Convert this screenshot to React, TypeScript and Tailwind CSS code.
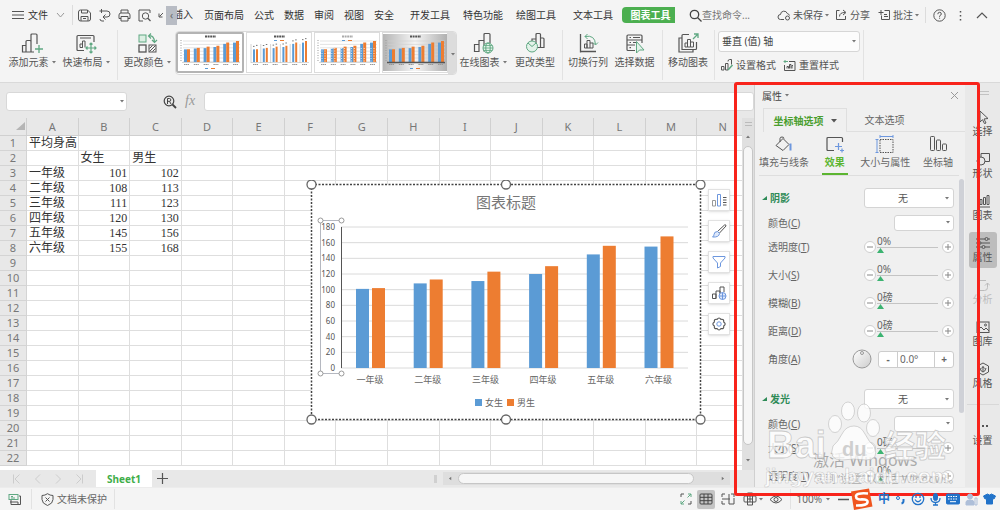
import { useState } from 'react';
import type { ReactNode } from 'react';

const GRADES = ['一年级', '二年级', '三年级', '四年级', '五年级', '六年级'];
const GIRLS = [101, 108, 111, 120, 145, 155];
const BOYS = [102, 113, 123, 130, 156, 168];

const COLUMNS = ['A', 'B', 'C', 'D', 'E', 'F', 'G', 'H', 'I', 'J', 'K', 'L', 'M', 'N'];
const ROWS = Array.from({ length: 22 }, (_, i) => i + 1);

const G = '#5fa882';
const B = '#6d97de';

interface IconProps {
  w?: number;
  h?: number;
  children: ReactNode;
  className?: string;
}

const Icon = ({ w = 14, h = 14, children, className = 'text-[#555]' }: IconProps) => (
  <svg
    width={w}
    height={h}
    viewBox={`0 0 ${w} ${h}`}
    fill="none"
    stroke="currentColor"
    strokeWidth={1}
    className={`shrink-0 ${className}`}
    aria-hidden="true"
  >
    {children}
  </svg>
);

const Caret = () => (
  <svg width="4" height="3" viewBox="0 0 4 3" className="shrink-0 text-[#777]" aria-hidden="true">
    <path d="M0 0h4L2 2.6z" fill="currentColor" />
  </svg>
);

const Separator = () => <div className="w-px self-stretch bg-[#e2e2e2]" />;

/* ---------- Menu bar ---------- */

const MenuBar = () => (
  <header className="flex h-[30px] shrink-0 items-center bg-[#f4f4f4] pl-3 text-[10px] leading-4 text-[#333]">
    <button className="flex items-center gap-1">
      <Icon w={12} h={10}>
        <path d="M0 1.5h12M0 5h12M0 8.5h12" />
      </Icon>
      <span>文件</span>
      <Icon w={9} h={6} className="ml-1 text-[#999]">
        <path d="M1 1l3.5 4L8 1" />
      </Icon>
    </button>
    <div className="mr-[5px] ml-[7px] h-5 w-px bg-[#dcdcdc]" />
    <div className="flex items-center gap-[7px]">
      <button aria-label="保存">
        <Icon w={13} h={13}>
          <path d="M.5 3Q.5 1 2.500 1h7l3 3v6q0 2-2 2h-8q-2 0-2-2zM3.500 1v3h6V1M3 12V7.500h7V12M5 9.500h3" />
        </Icon>
      </button>
      <button aria-label="输出">
        <Icon w={13} h={13}>
          <path d="M1.500 2H9a3 3 0 0 1 0 6H5M7.500 5.500L5 8l2.500 2.500M3.500 0v4M6 12h-2q-2 0-2-2" />
        </Icon>
      </button>
      <button aria-label="打印">
        <Icon w={13} h={13}>
          <path d="M3 4V1h7v3M3 9.500H1V6q0-2 2-2h7q2 0 2 2v3.500h-2M3 7.500h7V12H3z" />
        </Icon>
      </button>
      <button aria-label="打印预览">
        <Icon w={13} h={13}>
          <path d="M5 12H1V1h11v3" />
          <circle cx="7.500" cy="7" r="3.200" />
          <path d="M9.800 9.300L12.500 12" strokeWidth="1.300" />
        </Icon>
      </button>
      <Icon w={6} h={6}>
        <path d="M5 1L1.500 4.500M1 1.500V5h3.500" />
      </Icon>
    </div>
    <div className="ml-[2px] flex">
      <button aria-label="向左滚动" className="h-[19px] w-[11px] bg-[#b8bcc4] text-[10px] leading-4 text-[#666]">‹</button>
      <div className="w-4 overflow-hidden">
        <button className="-ml-1 whitespace-nowrap">插入</button>
      </div>
    </div>
    <nav className="ml-[11px] flex items-center whitespace-nowrap">
      <div className="flex gap-[10px]">
        {['页面布局', '公式', '数据', '审阅', '视图', '安全'].map((item) => (
          <button key={item}>{item}</button>
        ))}
      </div>
      <div className="ml-4 flex gap-[13px]">
        {['开发工具', '特色功能', '绘图工具'].map((item) => (
          <button key={item}>{item}</button>
        ))}
      </div>
      <button className="ml-[17px]">文本工具</button>
      <button className="ml-[9px] h-4 w-[53px] rounded-l-[4px] bg-[#4caf50] pl-1 font-bold text-white">图表工具</button>
    </nav>
    <label className="ml-[14px] flex items-center text-[#777]">
      <Icon w={13} h={13} className="text-[#444]">
        <circle cx="5.500" cy="5.500" r="4.200" strokeWidth="1.300" />
        <path d="M8.500 8.500L12.500 12.500" strokeWidth="1.300" />
      </Icon>
      <input
        className="w-[50px] bg-transparent outline-none placeholder:text-[#777]"
        placeholder="查找命令..."
        aria-label="查找命令"
      />
    </label>
    <div className="ml-auto flex items-center whitespace-nowrap text-[#555]">
      <button className="flex items-center gap-[2px]">
        <Icon w={14} h={12}>
          <path d="M7 10.500H3.500a2.500 2.500 0 0 1 0-5A3.500 3.500 0 0 1 10.300 4.500a3 3 0 0 1 2.200 2" />
          <circle cx="10.500" cy="9" r="2" />
        </Icon>
        未保存
        <Caret />
      </button>
      <button className="ml-[6px] flex items-center gap-[3px]">
        <Icon w={12} h={12}>
          <path d="M4.500 1.500h-3v9h9V7M4.500 7.500q0-4 5.500-4M8 1l3 2.500L8 6" />
        </Icon>
        分享
      </button>
      <button className="ml-[8px] flex items-center gap-[2px]">
        <Icon w={13} h={12}>
          <path d="M6.500 1.500h5v9h-8v-4M0.500 3.500h5M3 1v5M6 5.500h3M6 7.500h4" />
        </Icon>
        批注
        <Caret />
      </button>
      <div className="mr-[7px] ml-[6px] h-4 w-px bg-[#dcdcdc]" />
      <button aria-label="帮助">
        <Icon w={13} h={13}>
          <circle cx="6.500" cy="6.500" r="5.700" />
          <path d="M4.800 5.200q0-1.900 1.800-1.900t1.700 1.700q0 1-1.700 1.900v.9M6.600 8.700v1" />
        </Icon>
      </button>
      <button aria-label="更多" className="ml-[13px]">
        <Icon w={3} h={11}>
          <path d="M1.500 1v1.500M1.500 5v1.500M1.500 9v1.500" strokeWidth="1.500" />
        </Icon>
      </button>
      <button aria-label="收起" className="mr-[12px] ml-[14px]">
        <Icon w={12} h={8}>
          <path d="M1 7l5-5 5 5" strokeWidth="1.200" />
        </Icon>
      </button>
    </div>
  </header>
);

/* ---------- Ribbon ---------- */

interface RibbonButtonProps {
  label: string;
  width: string;
  caret?: boolean;
  children: ReactNode;
}

const RibbonButton = ({ label, width, caret, children }: RibbonButtonProps) => (
  <button className={`${width} flex shrink-0 flex-col items-center justify-start pt-[2px]`}>
    <Icon w={22} h={22}>{children}</Icon>
    <span className="flex items-center gap-[3px] leading-4 whitespace-nowrap">
      {label}
      {caret && <Caret />}
    </span>
  </button>
);

interface MiniChartProps {
  variant: number;
  active?: boolean;
}

const MiniChart = ({ variant, active }: MiniChartProps) => {
  const dark = variant === 3;
  const barWidth = variant === 1 ? 2 : 3;
  return (
    <button
      aria-label={`样式 ${variant + 1}`}
      className={active ? 'rounded-[2px] border-2 border-[#b4b4b4] bg-white' : 'border border-[#dcdcdc] bg-white'}
    >
      <svg width="64" height="37" viewBox="0 0 64 37" aria-hidden="true">
        <defs>
          <linearGradient id={`bg${variant}`} x1="0" x2="1">
            <stop offset="0" stopColor="#b5b5b5" />
            <stop offset="0.500" stopColor="#f5f5f5" />
            <stop offset="1" stopColor="#b0b0b0" />
          </linearGradient>
        </defs>
        <rect width="64" height="37" fill={dark ? `url(#bg${variant})` : '#fff'} />
        <path d="M27 2.500h11" stroke={variant === 2 ? '#aaa' : '#555'} strokeWidth="2" strokeDasharray="2 .6" />
        {variant !== 1 &&
          [0, 1, 2, 3, 4, 5, 6].map((i) => (
            <path key={i} d={`M5 ${7 + i * 3.400}h57`} stroke="#d0d0d0" strokeWidth=".6" />
          ))}
        {variant !== 1 && <path d="M3 6v22" stroke="#999" strokeDasharray="1 1.500" />}
        {GRADES.map((grade, i) => {
          const x = 6 + i * 9.800;
          return (
            <g key={grade}>
              {variant === 1 && <path d={`M${x - 2} 10v19`} stroke="#aaa" strokeWidth=".5" />}
              <rect x={x} y={28 - GIRLS[i] * 0.125} width={barWidth} height={GIRLS[i] * 0.125} fill="#5b9bd5" />
              <rect x={x + 3} y={28 - BOYS[i] * 0.125} width={barWidth} height={BOYS[i] * 0.125} fill="#ed7d31" />
              {variant === 2 && <path d={`M${x + 1} 14v14M${x + 4} 14v14`} stroke="#fff" strokeWidth=".8" strokeDasharray="1 1.500" />}
              {variant === 1 && <path d={`M${x} ${25 - GIRLS[i] * 0.125}h1.500m1.500-1h1.500`} stroke="#777" />}
              <path d={`M${x} 30.500h5`} stroke="#999" strokeDasharray="1.500 .4" />
            </g>
          );
        })}
        <path d="M4 28.500h58" stroke={dark ? '#555' : '#bbb'} strokeWidth={dark ? 1.500 : 0.600} />
        <path d={variant === 0 || dark ? 'M27 34.500h3' : 'M27 6.500h3'} stroke="#5b9bd5" />
        <path d={variant === 0 || dark ? 'M33 34.500h4' : 'M33 6.500h4'} stroke="#ed7d31" />
      </svg>
    </button>
  );
};

const Ribbon = () => (
  <section className="flex h-[53px] shrink-0 border-b border-[#d9d9d9] bg-[#f4f4f4] pb-[2px] pl-[5px] text-[10px] text-[#555]">
    <RibbonButton label="添加元素" width="w-[54px]" caret>
      <path d="M1.500 20V13.500h3.500V20zM5 20V9.500q0-1 1-1h3q1 0 1 1V20H5M10 12V3q0-1 1-1h4q1 0 1 1v9M10 20h3" strokeWidth="1.200" />
      <path d="M18 13v8M14 17h8" stroke={G} strokeWidth="1.300" />
    </RibbonButton>
    <RibbonButton label="快速布局" width="w-[54px]" caret>
      <path d="M9 18.500H3q-1 0-1-1v-13q0-1 1-1h15q1 0 1 1V10M5 6h11" strokeWidth="1.200" />
      <path d="M5 15.500V12h2.500v3.500zM7.500 15.500V9H10v6.500" />
      <path d="M16 11v10M11 16h10M14.500 12.500L16 11l1.500 1.500M14.500 19.500L16 21l1.500-1.500M12.500 14.500L11 16l1.500 1.500M19.500 14.500L21 16l-1.500 1.500" stroke={G} strokeWidth="1.200" />
    </RibbonButton>
    <div className="mr-[2px] ml-1 flex"><Separator /></div>
    <RibbonButton label="更改颜色" width="w-[54px]" caret>
      <rect x="3" y="3" width="7" height="7" stroke={G} fill="#dcefe3" />
      <rect x="3" y="13" width="7" height="7" strokeWidth="1.300" />
      <rect x="13" y="13" width="7" height="7" />
      <path d="M13.500 19.500l6-6M13.500 16.500l3-3M16.500 19.500l3-3" />
      <path d="M13 4q5-1 5.500 6M15 1.500L12.500 4 15 6.500M16 8l2.500 2.500L21 8" stroke={G} strokeWidth="1.200" />
    </RibbonButton>
    <div className="mt-[1px] ml-px flex h-11 w-[282px] shrink-0 items-start overflow-hidden rounded-[4px] border border-[#dadada] bg-white">
      <div className="flex gap-[2px]">
        <MiniChart variant={0} active />
        <MiniChart variant={1} />
        <MiniChart variant={2} />
        <MiniChart variant={3} />
      </div>
      <button aria-label="更多样式" className="ml-auto flex h-11 w-[10px] shrink-0 items-center justify-center bg-[#dcdcdc]">
        <Caret />
      </button>
    </div>
    <RibbonButton label="在线图表" width="w-[52px]" caret>
      <path d="M2.500 19.500v-7H7v7zM7 19.500V8.500h5v11M12 12V2.500q0-1 1-1h4q1 0 1 1V11" strokeWidth="1.200" />
      <circle cx="16" cy="16" r="5" fill="#e3f2e9" stroke={G} />
      <ellipse cx="16" cy="16" rx="2.200" ry="5" stroke={G} />
      <path d="M11 16h10M12 13.500h8M12 18.500h8" stroke={G} strokeWidth=".8" />
    </RibbonButton>
    <RibbonButton label="更改类型" width="w-[52px]">
      <path d="M8 9V7h4v8M12 15.500v-13q0-1 1-1h2.500q1 0 1 1v13H13M16.500 6H19q1 0 1 1v8.500h-4" strokeWidth="1.200" />
      <circle cx="8" cy="14.500" r="5.500" fill="#e3f2e9" stroke={G} />
      <path d="M4 11l4 3.500 4-3.500" stroke={G} />
    </RibbonButton>
    <div className="mr-[2px] ml-px flex"><Separator /></div>
    <RibbonButton label="切换行列" width="w-[46px]">
      <path d="M3.500 2v17.500H19M3.500 19.500v1" strokeWidth="1.300" />
      <path d="M7.500 16V12H10v4zM10 16V8.500h3V16zM13 11h3v5h-3" />
      <path d="M8 4.500q10-2 10.500 8M10.500 2L8 4.500 10.500 7M16 10.500l2.500 2.500 2.500-2.500" stroke={G} />
    </RibbonButton>
    <RibbonButton label="选择数据" width="w-[47px]">
      <path d="M11 18.500H4q-1 0-1-1V4q0-1 1-1h13q1 0 1 1v7M3 8h15M3 13h8M5.500 5.500H7M5.500 10.500H7M5.500 15.700H7M9 5.500h7M9 10.500h3" strokeWidth="1.200" />
      <path d="M12.500 9.500V21l3-3H20z" stroke={G} fill="#e3f2e9" />
    </RibbonButton>
    <div className="mr-[2px] ml-1 flex"><Separator /></div>
    <RibbonButton label="移动图表" width="w-[46px]">
      <path d="M12 2.500H6q-1 0-1 1v14h13.500q1 0 1-1V10M5 6H2v14h14v-2.500" strokeWidth="1.200" />
      <path d="M8 15v-4h2.500v4zM10.500 15V7.500h3V15zM13.500 10h3v5h-3" />
      <path d="M16 7l4.500-4.500M17 2h4v4" stroke={G} strokeWidth="1.300" />
    </RibbonButton>
    <div className="mr-[3px] ml-[3px] flex"><Separator /></div>
    <div className="flex w-[142px] shrink-0 flex-col gap-[5px] pt-[1px]">
      <button className="flex h-[21px] items-center justify-between rounded-[3px] border border-[#d6d6d6] bg-[#fcfcfc] px-[3px] text-[#444]">
        <span>垂直 (值) 轴</span>
        <Caret />
      </button>
      <div className="flex items-center justify-between pr-[21px] pl-[2px] leading-4">
        <button className="flex items-center gap-[2px]">
          <Icon w={14} h={14}>
            <path d="M1.500 12V8.500H4V12zM5.500 12V5.500H8V12zM8 3.500q0-2 1.500-2h2v5" />
            <path d="M12.500 7L8 12" stroke={G} strokeWidth="1.500" />
          </Icon>
          设置格式
        </button>
        <button className="flex items-center gap-[3px]">
          <Icon w={13} h={13}>
            <path d="M6 2.500h6v9H1.500V6M4 9.500v-2h1.500v2M6.500 9.500v-4h1.500v4M9 9.500v-3h1" />
            <path d="M1 2.500h4M2.500 1L1 2.500 2.500 4" stroke={G} />
          </Icon>
          重置样式
        </button>
      </div>
    </div>
    <div className="ml-[3px] flex"><Separator /></div>
  </section>
);

/* ---------- Sheet ---------- */

const FormulaBar = () => (
  <div className="flex h-[35px] shrink-0 items-start bg-[#e8e8e8] pt-[9px] pl-[6px]">
    <div className="flex h-[19px] w-[121px] items-center rounded-[3px] border border-[#d8d8d8] bg-white pr-[2px]">
      <input aria-label="名称框" className="w-full min-w-0 text-[10px] outline-none" />
      <Caret />
    </div>
    <Icon w={14} h={14} className="mt-[3px] ml-9 text-[#444]">
      <circle cx="6" cy="6" r="4.800" strokeWidth="1.200" />
      <path d="M9.500 9.500L13 13" strokeWidth="1.800" />
      <path d="M4.500 9V3.500h2q1.300 0 1.300 1.400T6.500 6.300h-2M6.500 6.300L8 9" />
    </Icon>
    <span className="ml-[8px] w-[19px] font-['Liberation_Serif',serif] text-[14px] leading-[18px] text-[#999] italic">fx</span>
    <input aria-label="编辑栏" className="h-[19px] min-w-0 flex-1 rounded-[3px] border border-[#d8d8d8] bg-white px-1 text-[10px] outline-none" />
  </div>
);

const cellText = (row: number, col: number) => {
  if (row === 1) return col === 0 ? '平均身高' : '';
  if (row === 2) return ['', '女生', '男生'][col] ?? '';
  if (row > 8 || col > 2) return '';
  return [GRADES[row - 3], GIRLS[row - 3], BOYS[row - 3]][col];
};

const SheetTable = () => (
  <table className="w-[749px] table-fixed border-separate border-spacing-0">
    <thead>
      <tr className="h-[18px] bg-[#e8e8e8] text-[11px] leading-[14px] text-[#777]">
        <th className="w-[27px] border-r border-b border-[#d0d0d0] p-0">
          <svg width="10" height="9" viewBox="0 0 10 9" className="ml-auto" aria-hidden="true">
            <path d="M9 0v8H0z" fill="#b5b5b5" />
          </svg>
        </th>
        {COLUMNS.map((col) => (
          <th key={col} className="border-r border-b border-[#d0d0d0] p-0 font-normal">{col}</th>
        ))}
      </tr>
    </thead>
    <tbody>
      {ROWS.map((row) => (
        <tr key={row} className="h-[15px]">
          <th className="border-r border-b border-[#d4d4d4] bg-[#e8e8e8] p-0 text-[11px] leading-[14px] font-normal text-[#777]">{row}</th>
          {COLUMNS.map((col, c) => (
            <td
              key={col}
              className={`h-[15px] border-r border-b border-[#dedede] p-0 px-[2px] font-['Liberation_Serif','Noto_Sans_CJK_SC',serif] text-[12px] leading-[14px] whitespace-nowrap text-[#333] ${row > 2 && c > 0 ? 'text-right' : ''}`}
            >
              {cellText(row, c)}
            </td>
          ))}
        </tr>
      ))}
    </tbody>
  </table>
);

const AXIS = [0, 20, 40, 60, 80, 100, 120, 140, 160, 180];
const BASE = 188;
const SCALE = 141 / 180;

const Chart = () => (
  <svg width="402" height="246" viewBox="0 0 402 246" className="font-['Noto_Sans','Noto_Sans_CJK_SC',sans-serif]" role="img" aria-label="图表标题">
    <rect x="5.500" y="4.500" width="389" height="235" fill="#fff" stroke="#444" strokeWidth="1.500" strokeDasharray="2 1.500" />
    <text x="200" y="28" fontSize="15" textAnchor="middle" fill="#777">图表标题</text>
    {AXIS.map((v) => (
      <g key={v}>
        <path d={`M35 ${BASE - v * SCALE}h347`} stroke="#dadada" />
        <text x="29" y={BASE + 3 - v * SCALE} fontSize="8" textAnchor="end" fill="#555">{v}</text>
      </g>
    ))}
    {GRADES.map((grade, i) => {
      const x = 50 + i * 57.700;
      return (
        <g key={grade}>
          <rect x={x} y={BASE - GIRLS[i] * SCALE} width="13" height={GIRLS[i] * SCALE} fill="#5b9bd5" />
          <rect x={x + 16} y={BASE - BOYS[i] * SCALE} width="13" height={BOYS[i] * SCALE} fill="#ed7d31" />
          <text x={x + 14} y="203" fontSize="9" textAnchor="middle" fill="#666">{grade}</text>
        </g>
      );
    })}
    <path d="M35.500 47v141" stroke="#555" />
    <path d="M35.500 40.500h-21v153h21" stroke="#b5b8c0" fill="none" />
    {[[14.5, 40.5], [35.5, 40.5], [14.5, 193.5], [35.5, 193.5]].map(([x, y]) => (
      <circle key={`${x}-${y}`} cx={x} cy={y} r="2.500" fill="#fff" stroke="#999" />
    ))}
    <rect x="169" y="219" width="7" height="7" fill="#5b9bd5" />
    <text x="179" y="226" fontSize="9" fill="#666">女生</text>
    <rect x="201" y="219" width="7" height="7" fill="#ed7d31" />
    <text x="211" y="226" fontSize="9" fill="#666">男生</text>
    {[[5.5, 4.5], [200, 4.5], [394.5, 4.5], [5.5, 239.5], [200, 239.5], [394.5, 239.5]].map(([x, y]) => (
      <circle key={`${x}-${y}`} cx={x} cy={y} r="4.500" fill="#fff" stroke="#666" strokeWidth="1.300" />
    ))}
  </svg>
);

const CHART_TOOLS = [
  {
    label: '图表元素',
    icon: (
      <>
        <path d="M1.500 14V8.500h3V14z" stroke="#999" />
        <path d="M6.500 14V2.500h3V14z" stroke={B} />
        <path d="M12 5.500h3.500M12 8h3.500M12 10.500h3.500M12 13h3.500" />
      </>
    ),
  },
  {
    label: '图表样式',
    icon: (
      <>
        <path d="M6.500 8.500l7-6.500q1.500-.8 1.500 1L8.500 10" />
        <path d="M6.500 8.500l2 2q-.5 4-7 3.500 1.500-1 1.500-2.500 0-2.800 3.500-3z" stroke={B} fill="#dfe9fa" />
      </>
    ),
  },
  { label: '图表筛选', icon: <path d="M2 2.500h12v1.500L9.500 9v3.500L6.500 14V9L2 4z" stroke={B} /> },
  {
    label: '在线图表',
    icon: (
      <>
        <path d="M1.500 13.500V9h3.500v4.500zM5 13.500V6h4v7M9 8V2h4v5" />
        <circle cx="11.500" cy="11" r="3.500" fill="#dfe9fa" stroke={B} />
        <path d="M8 11h7M11.500 7.500v7" stroke={B} />
      </>
    ),
  },
  {
    label: '设置',
    icon: (
      <>
        <path
          d="M6.300 3Q8 .5 9.700 3q2.900-.6 2.400 2.300 2.600 1.700 0 3.400.5 2.900-2.400 2.300Q8 13.500 6.300 11q-2.900.6-2.400-2.300-2.600-1.700 0-3.400Q3.400 2.400 6.300 3z"
          transform="translate(-1.100 0) scale(1.140)"
        />
        <circle cx="8" cy="8" r="2.200" stroke={B} />
      </>
    ),
  },
];

const Sheet = () => (
  <div className="flex min-w-0 flex-1 flex-col">
    <FormulaBar />
    <div className="relative flex min-h-0 flex-1">
      <div className="min-w-0 flex-1 overflow-hidden bg-white">
        <SheetTable />
      </div>
      <div className="flex w-[12px] shrink-0 flex-col items-center bg-[#e0e0e0]">
        <div className="mt-1 h-[4px] w-[7px] border-y border-[#bbb]" />
        <div className="mt-[9px] rotate-180"><Caret /></div>
        <div className="mt-[8px] w-[10px] flex-1 rounded-full border border-[#c6c6c6] bg-[#f6f6f6]" />
        <div className="mt-[14px] mb-[8px] flex h-[3px] items-center"><Caret /></div>
      </div>
      {/* the floating chart and its tool buttons sit over the cells */}
      <div className="absolute top-[62px] left-[306px] flex">
        <Chart />
        <div className="flex flex-col gap-[9px] pt-[9px]">
          {CHART_TOOLS.map(({ label, icon }) => (
            <button key={label} aria-label={label} className="flex size-[22px] items-center justify-center border border-[#e2e2e2] bg-white shadow-sm">
              <Icon w={16} h={16}>{icon}</Icon>
            </button>
          ))}
        </div>
      </div>
    </div>
    <div className="flex h-[17px] shrink-0 items-center bg-[#e8e8e8]">
      <div className="flex gap-[12px] pl-3">
        {['M1.500 0.500v9M7.500 0.500L3 5l4.500 4.500', 'M7 0.500L2.500 5 7 9.500', 'M2 0.500L6.500 5 2 9.500', 'M1.500 0.500L6 5 1.500 9.500M7.500 0.500v9'].map((d) => (
          <Icon key={d} w={9} h={10} className="text-[#ccc]">
            <path d={d} />
          </Icon>
        ))}
      </div>
      <button className="ml-[12px] h-full w-14 bg-white text-[10px] leading-4 font-bold text-[#3fae49]">Sheet1</button>
      <button aria-label="新建工作表" className="ml-[5px]">
        <Icon w={11} h={11}>
          <path d="M5.500 0v11M0 5.500h11" strokeWidth="1.200" />
        </Icon>
      </button>
      <div className="mr-[6px] ml-auto h-2 w-[3px] bg-[#d0d0d0]" />
      <div className="mr-[24px] flex h-[13px] w-[287px] items-center bg-[#dedede] px-[5px]">
        <div className="rotate-90"><Caret /></div>
        <div className="ml-[6px] h-[11px] w-[236px] rounded-full border border-[#c6c6c6] bg-[#f6f6f6]" />
        <div className="ml-auto -rotate-90"><Caret /></div>
      </div>
    </div>
  </div>
);

/* ---------- Property panel ---------- */

const PANEL_TABS = [
  {
    label: '填充与线条',
    icon: (
      <>
        <path d="M2 10.500L9 3.500l6 6-6 6zM6 7V3.500Q6 2 8 2t2 1.500" />
        <path d="M16.500 8.500v7" stroke={B} strokeWidth="2" />
      </>
    ),
  },
  {
    label: '效果',
    icon: (
      <>
        <path d="M9 15.500H3q-1 0-1-1v-11q0-1 1-1h13.500q1 0 1 1V7" strokeWidth="1.200" />
        <path d="M13.500 8v7M10 11.500h7M17 13.500v4M15 15.500h4" stroke={B} strokeWidth="1.200" />
      </>
    ),
  },
  {
    label: '大小与属性',
    icon: (
      <>
        <rect x="5" y="4.500" width="13" height="13" strokeDasharray="1.500 1" />
        <path d="M5 1.500h13M5 0v3M18 0v3M2 4.500v13M.5 4.500h3M.5 17.500h3" stroke={B} />
      </>
    ),
  },
  {
    label: '坐标轴',
    icon: (
      <>
        <rect x="2.500" y="1.500" width="4" height="14" rx=".8" />
        <rect x="8.500" y="5" width="4" height="10.500" rx=".8" />
        <rect x="14.500" y="9" width="4" height="6.500" rx=".8" />
      </>
    ),
  },
];

interface FieldProps {
  id: string;
  name: string;
  hotkey: string;
}

const FieldLabel = ({ id, name, hotkey }: FieldProps) => (
  <label htmlFor={id}>
    {name}(<u>{hotkey}</u>)
  </label>
);

const EffectHeader = ({ id, name }: { id: string; name: string }) => (
  <div className="flex h-7 items-center">
    <svg width="5" height="5" viewBox="0 0 5 5" aria-hidden="true">
      <path d="M5 0v4H0z" fill="#2e8b57" />
    </svg>
    <label htmlFor={id} className="ml-[3px] font-bold text-[#2e8b57]">{name}</label>
    <div className="ml-auto flex h-[20px] w-[90px] items-center rounded-[3px] border border-[#d4d4d4] bg-white pr-1">
      <select id={id} className="min-w-0 flex-1 appearance-none pr-2 pl-[33px] text-[10px] text-[#555] outline-none">
        <option>无</option>
      </select>
      <Caret />
    </div>
  </div>
);

const ColorField = ({ id }: { id: string }) => (
  <div className="flex h-[21px] items-center pl-[6px]">
    <FieldLabel id={id} name="颜色" hotkey="C" />
    <button id={id} aria-label="颜色" className="ml-auto flex h-4 w-[60px] items-center justify-end rounded-[3px] border border-[#d4d4d4] bg-white pr-[3px]">
      <Caret />
    </button>
  </div>
);

const StepButton = ({ plus }: { plus?: boolean }) => (
  <button aria-label={plus ? '增加' : '减少'} className="flex size-3 items-center justify-center rounded-full border border-[#cfcfcf] bg-white">
    <Icon w={6} h={6} className="text-[#888]">
      <path d={plus ? 'M0 3h6M3 0v6' : 'M0 3h6'} />
    </Icon>
  </button>
);

const SliderField = ({ id, name, hotkey, unit }: FieldProps & { unit: string }) => {
  const [value, setValue] = useState(0);
  return (
    <div className="flex h-7 items-center pl-[6px]">
      <FieldLabel id={id} name={name} hotkey={hotkey} />
      <div className="ml-auto flex items-center">
        <StepButton />
        <div className="mr-[4px] ml-[1px] flex h-7 w-[61px] flex-col pt-[3px]">
          <span className="h-[11px] leading-[11px] whitespace-nowrap">{value}{unit}</span>
          <input
            id={id}
            type="range"
            value={value}
            onChange={(e) => setValue(Number(e.target.value))}
            className="block h-[6px] w-full appearance-none bg-transparent [&::-webkit-slider-runnable-track]:h-[6px] [&::-webkit-slider-runnable-track]:border-t [&::-webkit-slider-runnable-track]:border-[#c4c4c4] [&::-webkit-slider-thumb]:h-[5px] [&::-webkit-slider-thumb]:w-[7px] [&::-webkit-slider-thumb]:appearance-none [&::-webkit-slider-thumb]:bg-[#3cb371] [&::-webkit-slider-thumb]:[clip-path:polygon(50%_0,100%_100%,0_100%)]"
          />
        </div>
        <StepButton plus />
      </div>
    </div>
  );
};

const AngleField = () => (
  <div className="flex h-7 items-center pl-[6px]">
    <FieldLabel id="angle" name="角度" hotkey="A" />
    <svg width="20" height="20" viewBox="0 0 20 20" className="mr-[6px] ml-auto" aria-hidden="true">
      <defs>
        <linearGradient id="dial" x1="0" y1="0" x2="1" y2="1">
          <stop offset="0" stopColor="#fff" />
          <stop offset="1" stopColor="#ccc" />
        </linearGradient>
      </defs>
      <circle cx="10" cy="10" r="9" fill="url(#dial)" stroke="#999" />
      <circle cx="10" cy="4" r="1.500" fill="none" stroke="#999" />
    </svg>
    <div className="flex h-[17px] w-[76px] items-center rounded-[3px] border border-[#cdcdcd] bg-white">
      <button aria-label="减小角度" className="w-[18px] font-bold">-</button>
      <input id="angle" defaultValue="0.0°" className="h-full w-[38px] min-w-0 border-x border-[#cdcdcd] pl-[2px] text-[10px] outline-none" />
      <button aria-label="增大角度" className="flex-1 font-bold">+</button>
    </div>
  </div>
);

const PropertyPanel = () => (
  <aside className="flex w-[211px] shrink-0 flex-col overflow-hidden border-l border-[#d0d0d0] bg-[#f0f0f0] text-[10px] leading-4 text-[#666]">
    <div className="flex h-[25px] shrink-0 items-center pr-[6px] pl-[7px]">
      <button className="flex items-center gap-[3px] text-[#444]">
        属性 <Caret />
      </button>
      <button aria-label="关闭" className="ml-auto">
        <Icon w={9} h={9} className="text-[#999]">
          <path d="M1 1l7 7M8 1L1 8" />
        </Icon>
      </button>
    </div>
    <div className="flex h-6 shrink-0 pl-2">
      <button className="flex w-[84px] items-center justify-center gap-[7px] border border-b-0 border-[#dfdfdf] font-bold text-[#4a9e2f]">
        坐标轴选项
        <svg width="6" height="4" viewBox="0 0 6 4" aria-hidden="true">
          <path d="M0 0h6L3 3.500z" fill="#555" />
        </svg>
      </button>
      <button className="flex-1 border-b border-[#dfdfdf] pr-[43px]">文本选项</button>
    </div>
    <div className="mr-[6px] ml-[4px] flex shrink-0 justify-between border-b border-[#dedede]">
      {PANEL_TABS.map(({ label, icon }) => (
        <button
          key={label}
          className={`flex h-[43px] flex-col items-center pt-[3px] whitespace-nowrap ${label === '效果' ? 'border-b-2 border-[#5cb531] px-[3px] font-bold text-[#5cb531]' : ''} ${label === '坐标轴' ? 'pr-[6px]' : ''}`}
        >
          <Icon w={20} h={19}>{icon}</Icon>
          <span>{label}</span>
        </button>
      ))}
    </div>
    <div className="flex min-h-0 flex-1 overflow-hidden">
      <div className="min-w-0 flex-1 pt-2 pr-[5px] pl-[7px] whitespace-nowrap">
        <EffectHeader id="shadow" name="阴影" />
        <ColorField id="shadow-color" />
        <SliderField id="shadow-alpha" name="透明度" hotkey="T" unit="%" />
        <SliderField id="shadow-size" name="大小" hotkey="S" unit="%" />
        <SliderField id="shadow-blur" name="模糊" hotkey="B" unit="磅" />
        <SliderField id="shadow-distance" name="距离" hotkey="D" unit="磅" />
        <AngleField />
        <div className="pt-3">
          <EffectHeader id="glow" name="发光" />
          <ColorField id="glow-color" />
          <SliderField id="glow-size" name="大小" hotkey="S" unit="磅" />
          <SliderField id="glow-alpha" name="透明度" hotkey="T" unit="%" />
        </div>
      </div>
      <div className="mt-[3px] mr-px h-[234px] w-[5px] shrink-0 rounded-full bg-[#cfd1d7]" />
    </div>
  </aside>
);

/* ---------- Side bar ---------- */

const SIDE_ITEMS = [
  { label: '选择', icon: <path d="M4 1l8 7.500-4 .5 2 4-1.500.7-2-4L4 12z" /> },
  {
    label: '形状',
    icon: (
      <>
        <path d="M5 5V1.500h8.500v8H9" />
        <circle cx="5" cy="9" r="4" />
      </>
    ),
  },
  { label: '图表', icon: <path d="M1.500 1v12H14M4 10.500v-5h2v5zM7.500 10.500v-7h2v7zM11 10.500V1.500h2v9z" /> },
  {
    label: '属性',
    icon: (
      <>
        <path d="M0 3h9M12 3h2M0 7h2M5 7h9M0 11h6M9 11h5" />
        <circle cx="10.500" cy="3" r="1.500" />
        <circle cx="3.500" cy="7" r="1.500" />
        <circle cx="7.500" cy="11" r="1.500" />
      </>
    ),
  },
  { label: '分析', icon: <path d="M1 2.500h9M2.500 5v7.500h6q3 0 3-3V5M9 7.500L11.500 5 14 7.500" /> },
  {
    label: '图库',
    icon: (
      <>
        <rect x="1" y="2" width="12" height="10.500" />
        <path d="M1 11l4-4 3 3 2-2 3 3" />
        <circle cx="9.500" cy="5" r="1" />
      </>
    ),
  },
  { label: '风格', icon: <path d="M7 1l5.500 3v6L7 13 1.500 10V4zM4 6q1 4 3 4t3-4M7 10V4.500M5.500 6.500L7 4.500l1.500 2" /> },
];

const SideBar = () => (
  <aside className="flex w-[35px] shrink-0 flex-col items-center bg-[#e9e9e9] pt-2 text-[10px] leading-[14px] text-[#555]">
    <div className="h-[4px] w-3 border-y border-[#c2c2c2]" />
    <div className="mt-[8px] flex flex-col">
      {SIDE_ITEMS.map(({ label, icon }) => (
        <div key={label} className={`flex h-[42px] items-center ${label === '分析' ? 'opacity-30' : ''}`}>
          <button className={`flex h-9 w-7 flex-col items-center justify-center rounded-[3px] ${label === '属性' ? 'bg-[#bdbdbd]' : ''}`}>
            <Icon>{icon}</Icon>
            {label}
          </button>
        </div>
      ))}
    </div>
    <div className="mt-[7px] h-px w-8 bg-[#d8d8d8]" />
    <button className="mt-[19px] flex flex-col items-center gap-[5px]">
      <Icon w={12} h={4}>
        <path d="M1 2h2M5 2h2M9 2h2" strokeWidth="2" />
      </Icon>
      设置
    </button>
  </aside>
);

/* ---------- Status bar ---------- */

const StatusBar = () => (
  <footer className="flex h-[23px] shrink-0 items-center border-t border-[#ececec] bg-[#f4f4f4] pl-2 text-[10px] text-[#666]">
    <Icon w={14} h={13}>
      <path d="M3 7v4.500h9.500V3H11M2 9h8v2.500" />
      <rect x="1" y="1.500" width="9" height="5" stroke={G} />
      <path d="M3 3.500h2M3 5h4" stroke={G} />
    </Icon>
    <div className="mx-[9px] h-5 w-px bg-[#e2e2e2]" />
    <Icon w={13} h={13}>
      <path d="M6.500.7Q9 2.500 12 2.500v4q0 4-5.500 6Q1 10.500 1 6.500v-4q3 0 5.500-1.800zM4.500 4.500l4 4M8.500 4.500l-4 4" />
    </Icon>
    <span className="ml-[3px]">文档未保护</span>
    <div className="ml-[7px] h-5 w-px bg-[#e2e2e2]" />
    <div className="mr-[151px] ml-auto flex items-center">
      <button aria-label="全屏显示">
        <Icon w={12} h={12}>
          <path d="M1 4V1h3M8 11h3V8" />
          <path d="M8 1h3v3M11 1L7.500 4.500M1 8v3h3M1 11l3.500-3.500" stroke={G} />
        </Icon>
      </button>
      <button aria-label="普通视图" className="ml-[5px] flex h-[19px] w-[18px] items-center justify-center rounded-[2px] bg-[#c4c4c4]">
        <Icon w={14} h={12} className="text-[#444]">
          <rect x="1" y="1" width="12" height="10" rx="1" />
          <path d="M1 4.300h12M1 7.700h12M5 1v10M9 1v10" />
        </Icon>
      </button>
      <button aria-label="分页预览" className="ml-[6px]">
        <Icon w={14} h={12}>
          <path d="M1 4V1h3M10 1h3v3M1 8v3h3M8 1v10M1 6h8M13 5v6H8" />
        </Icon>
      </button>
      <button aria-label="页面布局" className="ml-2 flex items-center gap-[2px]">
        <Icon w={14} h={14}>
          <rect x="1" y="4" width="12" height="6" rx="1" />
          <path d="M4.500 1h5v12h-5zM4.500 7h5M7 4v6" />
        </Icon>
        <Caret />
      </button>
      <button aria-label="护眼模式" className="ml-[6px]">
        <Icon w={14} h={12}>
          <path d="M1 6.500q6-7 12 0-6 7-12 0z" />
          <circle cx="7" cy="6.500" r="2" />
        </Icon>
      </button>
      <div className="mr-[6px] ml-[7px] h-5 w-px bg-[#e2e2e2]" />
      <button className="flex items-center gap-1">
        100% <Caret />
      </button>
      <button aria-label="缩小" className="ml-[8px]">
        <Icon w={11} h={3}>
          <path d="M0 1.500h11" strokeWidth="1.500" />
        </Icon>
      </button>
    </div>
  </footer>
);

const InputMethodTray = () => (
  <div className="absolute right-[4px] bottom-0 flex h-[22px] items-center gap-[5px] text-[#2273c9]">
    <svg width="23" height="22" viewBox="0 0 23 22" aria-hidden="true">
      <path d="M1 3.500L19 .5 22.500 18.500 4 22z" fill="#f0541e" />
      <path d="M18 5.500Q6 4.500 6 8.300t6 3q6.500 0 5.500 3.200T6 17.500" fill="none" stroke="#fff" strokeWidth="2.600" />
    </svg>
    <span className="text-[12px] leading-4 font-bold">中</span>
    <Icon w={11} h={12} className="text-[#2273c9]">
      <circle cx="3" cy="5" r="1.500" />
      <path d="M8.500 6v2q0 2-2 2.500" strokeWidth="2" />
    </Icon>
    <Icon w={14} h={14} className="text-[#2273c9]">
      <circle cx="7" cy="7" r="5.700" strokeWidth="1.300" />
      <path d="M4 7.500q3 4.500 6 0M5 4v2M9 4v2" strokeWidth="1.300" />
    </Icon>
    <Icon w={11} h={14} className="text-[#2273c9]">
      <rect x="3.500" y="1.500" width="4" height="7" rx="2" fill="currentColor" />
      <path d="M1 6q0 4.500 4.500 4.500T10 6M5.500 10.500V13M3 13h5" strokeWidth="1.300" />
    </Icon>
    <Icon w={14} h={12} className="text-[#2273c9]">
      <rect x=".5" y="1" width="13" height="10" rx="1" fill="currentColor" />
      <path d="M2 3.500h10M2 6h10" stroke="#fff" strokeDasharray="1.500 1" />
      <path d="M4 8.700h6" stroke="#fff" />
    </Icon>
    <Icon w={13} h={13} className="text-[#aebfd9]">
      <circle cx="5" cy="3.500" r="2.500" fill="currentColor" />
      <path d="M1 12V9q0-2 4-2t4 2v3z" fill="currentColor" />
      <path d="M10 5h2v7h-2z" />
    </Icon>
    <Icon w={13} h={12} className="text-[#2273c9]">
      <path d="M4.500 1Q6.500 3 8.500 1l4 2-1.500 3-1.500-.5V11h-6V5.500L2 6 .5 3z" fill="currentColor" />
    </Icon>
  </div>
);

const Watermark = () => (
  <svg
    width="210"
    height="96"
    viewBox="0 0 210 96"
    className="pointer-events-none absolute right-[30px] bottom-[17px] font-['Noto_Sans','Noto_Sans_CJK_SC',sans-serif]"
  >
    <g fill="#8a8a8a" fillOpacity=".7">
      <text x="53" y="69" fontSize="16">激活 Windows</text>
      <text x="54" y="86" fontSize="11">转到“设置”以激活 Windows。</text>
    </g>
    <g fill="#fff" fillOpacity=".75" stroke="#bdbdbd" strokeOpacity=".8" strokeWidth=".8">
      <ellipse cx="88" cy="14" rx="6.500" ry="9" />
      <ellipse cx="104" cy="16" rx="6.500" ry="9" />
      <ellipse cx="75" cy="27" rx="6.500" ry="8.500" />
      <ellipse cx="113" cy="31" rx="6.500" ry="8.500" />
      <path d="M94 29q7 0 11 8t9 12q6 14-8 14-12-2-24 0-14 0-9-14 5-4 9-12t12-8z" />
      <text x="7" y="61" fontSize="38" fontWeight="bold" className="font-['Liberation_Sans',sans-serif]">Bai</text>
      <text x="124" y="60" fontSize="31" fontWeight="bold">经验</text>
      <text x="5" y="86" fontSize="21" fontWeight="bold" strokeWidth=".5" className="font-['Liberation_Sans',sans-serif]">jingyan.baidu.com</text>
    </g>
    <text x="82" y="59" fontSize="20" fontWeight="bold" fill="#cfcfcf" className="font-['Liberation_Sans',sans-serif]">du</text>
  </svg>
);

const App = () => (
  <div className="relative flex h-screen flex-col overflow-hidden bg-[#f4f4f4] font-['Noto_Sans','Noto_Sans_CJK_SC',sans-serif]">
    <MenuBar />
    <Ribbon />
    <main className="flex min-h-0 flex-1">
      <Sheet />
      <PropertyPanel />
      <SideBar />
    </main>
    <StatusBar />
    <Watermark />
    <div className="pointer-events-none absolute top-[82px] right-[20px] bottom-[14px] w-[246px] rounded-[3px] border-3 border-[#f8231b]" />
    <InputMethodTray />
  </div>
);

export default App;
